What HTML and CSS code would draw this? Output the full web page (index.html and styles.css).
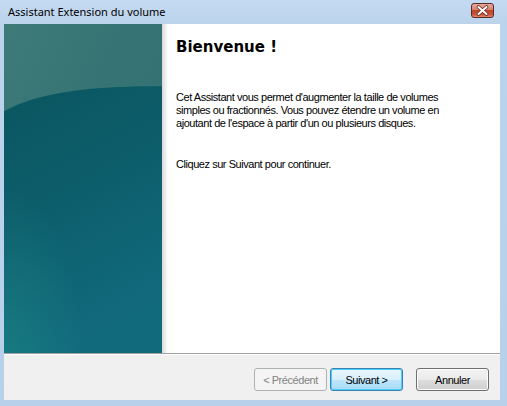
FILE: index.html
```html
<!DOCTYPE html>
<html lang="fr">
<head>
<meta charset="utf-8">
<title>Assistant Extension du volume</title>
<link rel="stylesheet" href="styles.css">
</head>
<body>
<div class="window">
  <div class="titlebar">
    <span class="title">Assistant Extension du volume</span>
    <span class="close">
      <svg width="23" height="15" viewBox="0 0 23 15">
        <path d="M7.5 4 L15.5 11 M15.5 4 L7.5 11" stroke="#6b2a22" stroke-width="3.6" stroke-linecap="round"/>
        <path d="M7.5 4 L15.5 11 M15.5 4 L7.5 11" stroke="#ffffff" stroke-width="2" stroke-linecap="round"/>
      </svg>
    </span>
  </div>
  <div class="client">
    <div class="main">
      <div class="side">
        <svg width="158" height="329" viewBox="0 0 158 329">
          <defs>
            <linearGradient id="top" x1="0" y1="0" x2="1" y2="1">
              <stop offset="0" stop-color="#3d7a78"/>
              <stop offset="1" stop-color="#2c6b6f"/>
            </linearGradient>
            <linearGradient id="body" x1="0" y1="0" x2="0.3" y2="1">
              <stop offset="0" stop-color="#0a5660"/>
              <stop offset="0.5" stop-color="#0d5e6c"/>
              <stop offset="1" stop-color="#116a7c"/>
            </linearGradient>
            <radialGradient id="glow" cx="0" cy="1" r="0.5">
              <stop offset="0" stop-color="#1c8686" stop-opacity="0.6"/>
              <stop offset="1" stop-color="#1c8686" stop-opacity="0"/>
            </radialGradient>
          </defs>
          <rect width="158" height="329" fill="url(#top)"/>
          <path d="M0 87 C30 70 80 61 158 62 L158 329 L0 329 Z" fill="url(#body)"/>
          <path d="M0 87 C30 70 80 61 158 62" fill="none" stroke="#3f7e7c" stroke-opacity="0.5" stroke-width="1"/>
          <rect width="158" height="329" fill="url(#glow)"/>
        </svg>
      </div>
      <div class="shade"></div>
      <div class="content">
        <h1 class="heading">Bienvenue !</h1>
        <p class="text">Cet Assistant vous permet d'augmenter la taille de volumes simples ou fractionnés. Vous pouvez étendre un volume en ajoutant de l'espace à partir d'un ou plusieurs disques.</p>
        <p class="text next">Cliquez sur Suivant pour continuer.</p>
      </div>
    </div>
    <div class="sep"></div>
    <div class="footer">
      <button class="btn disabled" disabled>&lt; Précédent</button>
      <button class="btn default">Suivant &gt;</button>
      <button class="btn cancel">Annuler</button>
    </div>
  </div>
</div>
</body>
</html>
```
FILE: styles.css
```css
html, body {
  margin: 0;
  padding: 0;
}
body {
  width: 507px;
  height: 406px;
  overflow: hidden;
  background: #bad1ea;
}
.window {
  display: flex;
  flex-direction: column;
  height: 406px;
  background: linear-gradient(to bottom, #c4daf2 0, #bcd3ec 24px, #b9d0ea 100%);
}
.titlebar {
  height: 24px;
  display: flex;
  align-items: center;
  justify-content: space-between;
  padding: 0 13px 0 8px;
  box-sizing: border-box;
}
.title {
  font-family: "Noto Sans", "Open Sans", sans-serif;
  font-size: 11px;
  color: #000;
  position: relative;
  top: -1px;
}
.close {
  display: flex;
  width: 23px;
  height: 15px;
  margin-top: -3px;
  box-sizing: border-box;
  border: 1px solid #5b2a28;
  border-radius: 3px;
  background: linear-gradient(to bottom, #e9a99c 0%, #d9806e 45%, #c0442c 50%, #c8543a 80%, #e38a6e 100%);
  overflow: hidden;
}
.close svg {
  margin: -1px;
}
.client {
  margin: 0 7px 6px 4px;
  flex: 1;
  display: flex;
  flex-direction: column;
  background: #f0f0f0;
}
.main {
  height: 329px;
  display: flex;
  background: #ffffff;
}
.side {
  width: 158px;
  height: 329px;
  flex: none;
}
.side svg {
  display: block;
}
.shade {
  width: 6px;
  flex: none;
  background: linear-gradient(to right, #d8d8d8, #ffffff);
}
.content {
  padding: 13px 10px 0 8px;
  font-family: "Liberation Sans", Arial, sans-serif;
  font-size: 11px;
  letter-spacing: -0.45px;
  color: #000;
}
.heading {
  margin: 0 0 34px 0;
  font-family: "DejaVu Sans", Verdana, sans-serif;
  font-weight: bold;
  font-size: 15px;
  line-height: 20px;
  letter-spacing: 0;
}
.text {
  margin: 0;
  line-height: 13px;
  width: 290px;
}
.next {
  margin-top: 28px;
}
.sep {
  height: 1px;
  background: #a0a0a0;
  border-bottom: 1px solid #ffffff;
}
.footer {
  display: flex;
  justify-content: flex-end;
  align-items: flex-start;
  padding: 13px 11px 0 0;
}
.btn {
  width: 73px;
  height: 23px;
  box-sizing: border-box;
  margin: 0;
  padding: 0;
  font-family: "Liberation Sans", Arial, sans-serif;
  font-size: 11px;
  letter-spacing: -0.45px;
  color: #000;
  border: 1px solid #707070;
  border-radius: 3px;
  background: linear-gradient(to bottom, #f2f2f2 0%, #ebebeb 50%, #dddddd 51%, #cfcfcf 100%);
  box-shadow: inset 0 0 0 1px #fcfcfc;
}
.btn.disabled {
  color: #838383;
  border-color: #adb2b5;
  background: #f4f4f4;
  box-shadow: none;
}
.btn.default {
  margin-left: 3px;
  border-color: #3c7fb1;
  background: linear-gradient(to bottom, #eaf6fd 0%, #d9f0fc 50%, #bee6fd 51%, #a7d9f5 100%);
  box-shadow: inset 0 0 0 1px #48cff8;
}
.btn.cancel {
  margin-left: 13px;
}
```
